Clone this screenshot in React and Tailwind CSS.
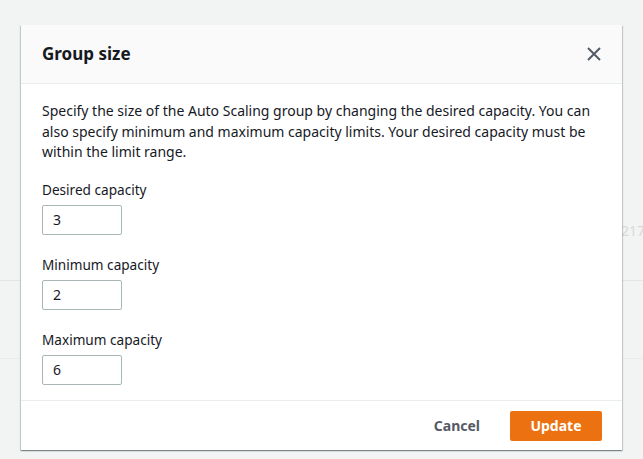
export default function App() {
  const font = { fontFamily: "'Noto Sans', Roboto, sans-serif" }
  const fields = [
    { label: "Desired capacity", value: "3" },
    { label: "Minimum capacity", value: "2" },
    { label: "Maximum capacity", value: "6" },
  ]

  return (
    <div className="relative h-[459px] w-[643px] overflow-hidden bg-[#f2f3f3]" style={font}>
      {/* page behind the modal */}
      <div className="absolute left-0 right-0 top-[280px] h-px bg-[#e4e7e7]" />
      <div className="absolute left-0 right-0 top-[358px] h-px bg-[#e9ebeb]" />
      <div className="absolute left-[621px] top-[220px] text-[14px] text-[#d5dbdb]">217</div>

      {/* modal */}
      <div className="absolute left-[21px] top-[25px] flex h-[425px] w-[601px] flex-col bg-white shadow-[0_1px_1px_0_rgba(0,28,36,0.3),1px_1px_1px_0_rgba(0,28,36,0.15),-1px_1px_1px_0_rgba(0,28,36,0.15)]">
        <div className="flex h-[59px] items-center justify-between border-b border-[#eaeded] bg-[#fafafa] pl-[21px] pr-[20px]">
          <h2 className="text-[17px] font-bold text-[#16191f]">Group size</h2>
          <svg width="16" height="16" viewBox="0 0 16 16" className="text-[#545b64]">
            <path d="M2 2l12 12M14 2L2 14" stroke="currentColor" strokeWidth="2" fill="none" />
          </svg>
        </div>

        <div className="flex-1 px-[21px] pt-[17px]">
          <p className="text-[14px] leading-[20.5px] text-[#16191f]">
            Specify the size of the Auto Scaling group by changing the desired capacity. You can also specify minimum and maximum capacity limits. Your desired capacity must be within the limit range.
          </p>
          <div className="mt-[17px] flex flex-col gap-[20px]">
            {fields.map((f) => (
              <div key={f.label}>
                <div className="text-[13.6px] leading-[20px] text-[#16191f]">{f.label}</div>
                <div className="mt-[5px] flex h-[30px] w-[80px] items-center rounded-[2px] border border-[#aab7b8] pl-[10px] text-[14px] text-[#16191f]">
                  {f.value}
                </div>
              </div>
            ))}
          </div>
        </div>

        <div className="flex h-[50px] items-center justify-end gap-[30px] border-t border-[#eaeded] pr-[20px]">
          <span className="text-[14px] font-bold text-[#545b64]">Cancel</span>
          <button className="h-[30px] w-[92px] rounded-[2px] bg-[#ec7211] text-[14px] font-bold text-white">
            Update
          </button>
        </div>
      </div>
    </div>
  )
}
